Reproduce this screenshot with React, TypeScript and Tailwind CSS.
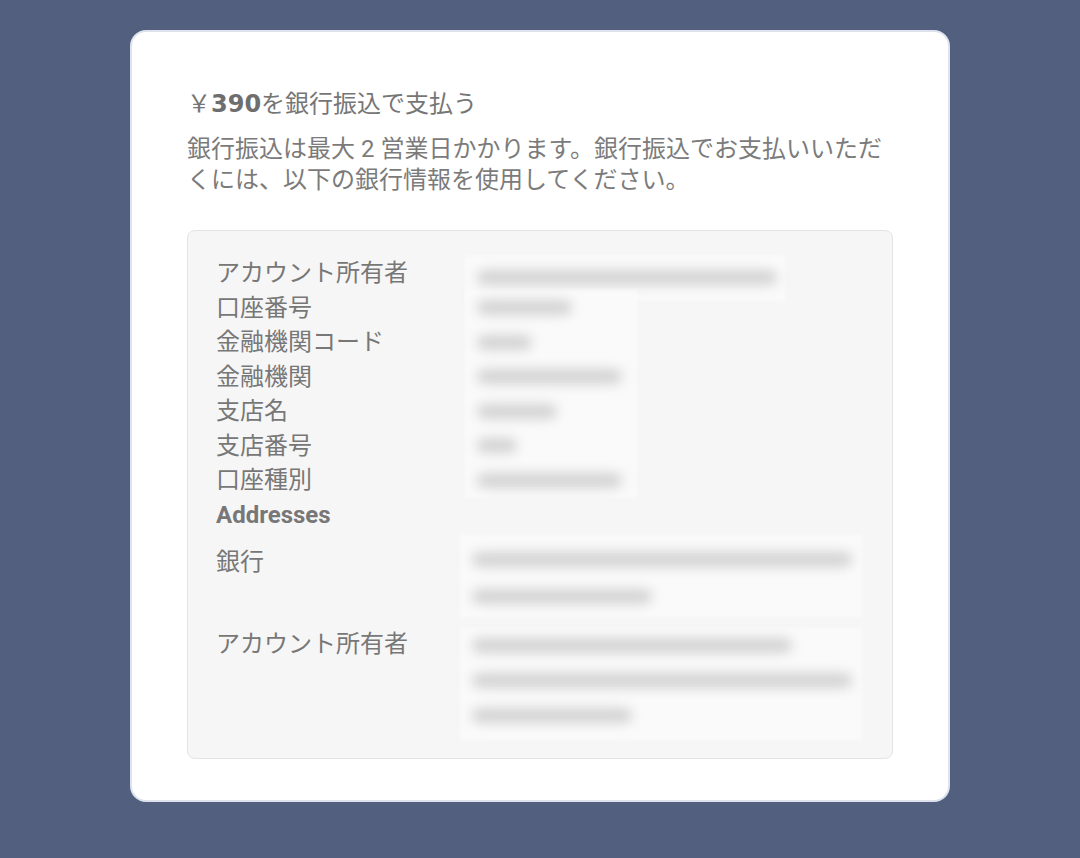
import React from "react";

const jp = { fontFamily: '"Roboto", "Noto Sans CJK JP", sans-serif' };

// blurred placeholder lines standing in for hidden account data
const Redacted = ({
  widths,
  lineH = 34.5,
  pt = 0,
  pb = 0,
}: {
  widths: number[];
  lineH?: number;
  pt?: number;
  pb?: number;
}) => (
  <div className="relative" style={{ paddingTop: pt, paddingBottom: pb }}>
    <div className="absolute inset-0 bg-[#fafafa] blur-[2px]" />
    <div className="relative flex flex-col">
      {widths.map((w, i) => (
        <div key={i} className="flex items-center pl-[12px]" style={{ height: lineH }}>
          <div className="h-[15px] rounded-full bg-[#d3d3d3] blur-[6px]" style={{ width: w }} />
        </div>
      ))}
    </div>
  </div>
);

const fields = ["口座番号", "金融機関コード", "金融機関", "支店名", "支店番号", "口座種別"];
const fieldWidths = [95, 55, 145, 80, 40, 145];

export default function App() {
  return (
    <div className="min-h-screen w-full bg-[#525f7f] flex justify-center pt-[30px]" style={jp}>
      <div className="w-[820px] h-[772px] bg-white rounded-[16px] border-2 border-[#dde2ee] px-[55px] pt-[56px]">
        <h1 className="text-[24px] leading-[32px] text-[#767676] font-normal">
          ￥<span className="text-[24px] font-bold text-[#6e6e6e]" style={{ fontFamily: '"DejaVu Sans", sans-serif' }}>390</span>を銀行振込で支払う
        </h1>
        <p className="mt-[14px] text-[24px] leading-[31px] text-[#7b7b7b] pr-[10px]">
          銀行振込は最大 2 営業日かかります。銀行振込でお支払いいただくには、以下の銀行情報を使用してください。
        </p>
        <div className="mt-[34px] h-[529px] bg-[#f6f6f6] border border-[#e4e4e4] rounded-[8px] pl-[28px] pr-[30px] pt-[25px]">
          <div className="grid grid-cols-[249px_1fr] text-[24px] text-[#777777]">
            <div className="h-[34.5px] leading-[34.5px]">アカウント所有者</div>
            <div className="w-[320px]">
              <Redacted widths={[300]} pt={4} pb={6} />
            </div>
          </div>
          <div className="grid grid-cols-[249px_1fr] text-[24px] text-[#777777] -mt-[10px]">
            <div className="flex flex-col">
              {fields.map((f) => (
                <div key={f} className="h-[34.5px] leading-[34.5px]">{f}</div>
              ))}
            </div>
            <div className="w-[172px]">
              <Redacted widths={fieldWidths} />
            </div>
          </div>
          <div className="text-[24px] leading-[34px] font-bold text-[#777777]">Addresses</div>
          <div className="grid grid-cols-[244px_1fr] gap-y-[11px] mt-[3px] text-[24px] text-[#777777]">
            <div className="leading-[34px] pt-[10px]">銀行</div>
            <Redacted widths={[380, 180]} lineH={37} pt={6} pb={2} />
            <div className="leading-[34px] -mt-[1px]">アカウント所有者</div>
            <Redacted widths={[320, 380, 160]} lineH={35} pb={7} />
          </div>
        </div>
      </div>
    </div>
  );
}
